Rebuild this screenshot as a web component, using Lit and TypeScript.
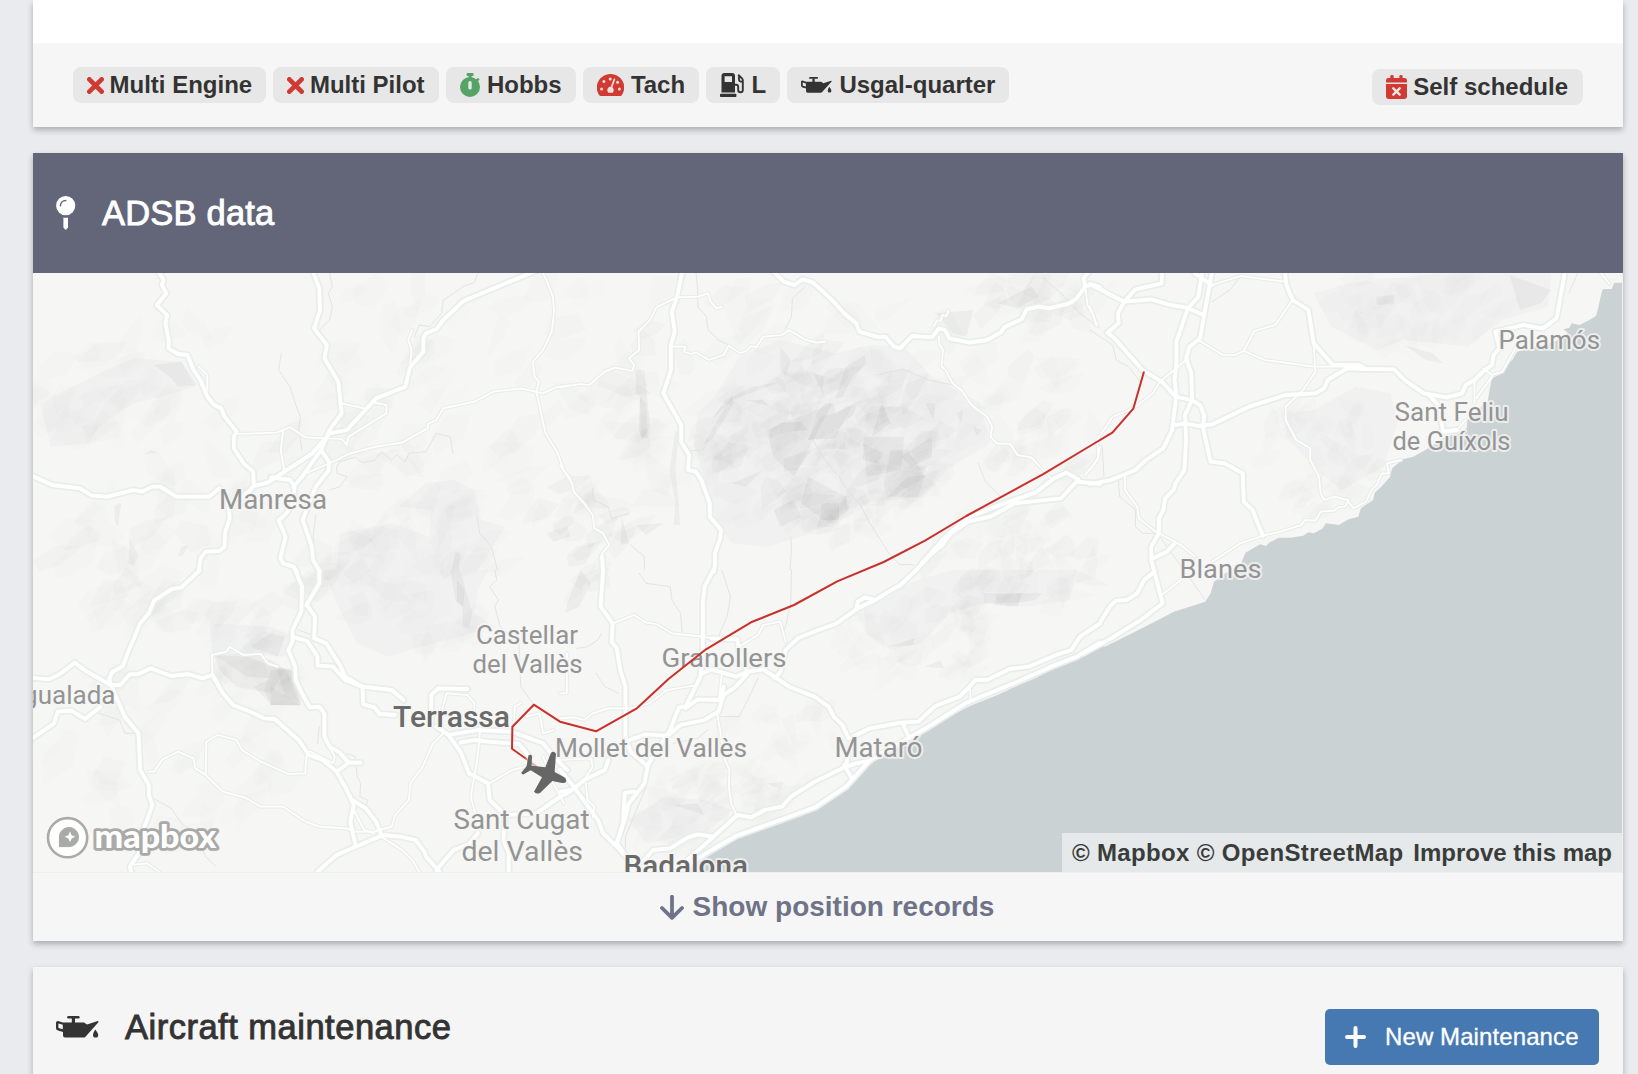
import { LitElement, html, svg, css } from "lit";
import { customElement } from "lit/decorators.js";

/* ---------- icons ---------- */

const crossIcon = html`<svg class="icon" width="17" height="17" viewBox="0 0 16 16">
  <path d="M2.2 2.2 13.8 13.8M13.8 2.2 2.2 13.8" stroke="#d03a32" stroke-width="4.4" stroke-linecap="round" /></svg>`;

const stopwatchIcon = html`<svg class="icon" width="20" height="24" viewBox="0 0 20 24">
  <g fill="#55a365"><circle cx="10" cy="14" r="10" />
  <rect x="6.6" y="0" width="7" height="3" rx="1" /><rect x="8.6" y="1" width="3" height="5" />
  <path d="M15.4 7.2 17.8 4.8 19.6 6.6 17.4 9z" /></g>
  <rect x="8.3" y="8" width="3.4" height="8.6" rx="1.7" fill="#e7e7e7" /></svg>`;

const gaugeIcon = html`<svg class="icon" width="27" height="22" viewBox="0 0 27 22">
  <path d="M13.5 0a13.5 13.5 0 0 1 12 20q-1 2-2 2H3.5q-1 0-2-2A13.5 13.5 0 0 1 13.5 0z" fill="#d03a32" />
  <g fill="#f3dedd"><circle cx="6.9" cy="7.6" r="1.5" /><circle cx="13.2" cy="4.9" r="1.5" />
  <circle cx="20.6" cy="8.2" r="1.5" /><circle cx="4.6" cy="15" r="1.5" /><circle cx="22.4" cy="15" r="1.5" /></g>
  <path d="M17.4 5.4 14.2 14" stroke="#f3dedd" stroke-width="1.7" stroke-linecap="round" />
  <path d="M13.5 12.8a3.2 3.2 0 0 1 3 4.4l-.6 1.6h-4.8l-.6-1.6a3.2 3.2 0 0 1 3-4.4z" fill="#f3dedd" /></svg>`;

const pumpIcon = html`<svg class="icon" width="24" height="24" viewBox="0 0 24 24">
  <path fill="#333" fill-rule="evenodd" d="M4.5 0H12a3 3 0 0 1 3 3V19.5H1.5V3a3 3 0 0 1 3-3zM4.6 3.2V9H12V3.2z" />
  <rect x="0" y="20.8" width="16.4" height="3.2" rx=".8" fill="#333" />
  <path d="M15 11.8h1.2a2 2 0 0 1 2 2V17a2.2 2.2 0 0 0 4.6 0V7.4a3 3 0 0 0-.8-2L18.2 1.8M19 3.4v3.2a2 2 0 0 0 1.6 2h2" fill="none" stroke="#333" stroke-width="1.9" /></svg>`;

const oilShape = svg`<g fill="#333">
  <path fill-rule="evenodd" d="M2 4.9 7 6.6H28L31 8.6 41.8 5q1.4 0 .4 1.4L29.7 20.4Q28.8 21.6 27 21.6H9Q7 21.6 7 19.6V16L2 14.6Q0 14 0 12.2V6.6Q0 5 2 4.9zM2.4 7.6V12L6.8 13.2V8.8z" />
  <rect x="11.2" y="0" width="12.4" height="2.4" rx="1.2" /><rect x="15.8" y="2" width="3.2" height="5" />
  <path d="M39.2 13.6q3 3.8 3 5.3a2.6 2.6 0 0 1-5.2 0q0-1.5 2.2-5.3z" /></g>`;
const oilIcon = html`<svg class="icon" width="31" height="16" viewBox="0 0 43 22">${oilShape}</svg>`;
const oilIconLarge = html`<svg width="43" height="22" viewBox="0 0 43 22">${oilShape}</svg>`;

const calendarIcon = html`<svg class="icon" width="21" height="24" viewBox="0 0 21 24">
  <g fill="#d03a32"><rect x="4.4" y="0" width="3.2" height="5" rx="1.2" /><rect x="13.4" y="0" width="3.2" height="5" rx="1.2" />
  <path d="M2.4 3H18.6A2.4 2.4 0 0 1 21 5.4V7.5H0V5.4A2.4 2.4 0 0 1 2.4 3z" />
  <path d="M0 9H21V21.6A2.4 2.4 0 0 1 18.6 24H2.4A2.4 2.4 0 0 1 0 21.6z" /></g>
  <path d="M7.3 13.3 13.7 19.7M13.7 13.3 7.3 19.7" stroke="#f0e4e4" stroke-width="2.4" stroke-linecap="round" /></svg>`;

const pinIcon = html`<svg width="20" height="34" viewBox="0 0 20 34">
  <circle cx="9.7" cy="9.6" r="9.6" fill="#fff" /><path d="M4.4 9.8a5.4 5.4 0 0 1 5.3-5.2" fill="none" stroke="#636678" stroke-width="1.5" stroke-linecap="round" />
  <path d="M7.4 21.4q2.3.5 4.6 0V31.4L9.7 34 7.4 31.4z" fill="#fff" /></svg>`;

const arrowIcon = html`<svg width="24" height="25" viewBox="0 0 24 25">
  <path d="M12 1.8V22.4M2 13 12 22.8 22 13" fill="none" stroke="#6f7388" stroke-width="3.8" stroke-linecap="round" stroke-linejoin="round" /></svg>`;

const plusIcon = html`<svg width="21" height="22" viewBox="0 0 21 22">
  <path d="M10.5 2V20M2 11H19" stroke="#fff" stroke-width="4" stroke-linecap="round" /></svg>`;

/* ---------- map data ---------- */

interface Tile {
  x: number;
  y: number;
  sx: number;
  major: string[];
  minor: string[];
  border: string[];
  massif: string[];
  relief: string[];
}

const tiles: Tile[] = [
  {
    x: 30, y: 270, sx: 0.34439,
    major: [
      "370,0 388,30 383,45 396,70 368,105 398,135 393,160 403,210 402,235 430,252 457,255 475,300 495,330 515,380 535,405 555,415 565,440 600,485 592,500 592,535 620,580 648,605 650,645",
      "820,0 840,55 842,120 825,175 862,225 855,265 895,335 905,430 870,480 845,540 790,620 765,650",
      "1480,-2 1400,32 1260,92 1200,150 1180,178 1150,190 1142,205 1142,245 1103,293 1090,350 1005,385 920,480 870,490 820,550 690,638 650,648 620,680",
      "0,615 65,645 145,655 180,677 225,680 300,660 325,665 355,650 378,650 425,680 520,680 550,655",
      "575,700 580,745 567,785 565,830 550,843 510,845 495,865 490,905",
      "845,540 868,575 868,600 830,650 810,700 792,750 818,830 822,870 842,905",
      "700,622 755,630 768,650 765,700 740,735 722,750 742,800 727,865 735,880 765,890 775,905",
    ],
    minor: [
      "605,492 715,488 755,472 800,502 905,507 920,525 925,500 1035,430 1035,405 1000,398",
      "905,400 970,415", "490,290 515,315 515,360", "735,485 728,540 740,610",
      "790,615 870,580 930,550 1005,530 1080,518 1155,475 1155,462 1180,450 1200,415 1290,395 1345,365 1425,355 1490,370 1525,353 1568,345",
      "1110,180 1098,210 1108,240 1103,290",
      "1490,10 1505,45 1518,80 1522,125 1515,185 1490,240 1460,275 1465,320 1478,335 1470,365 1497,490 1530,545 1550,600 1568,625",
    ],
    border: [
      "870,10 878,50 866,70 878,110 870,150 840,180", "730,250 722,300 755,350 770,400 785,440 780,480 790,540",
      "1300,10 1290,38 1260,48 1230,70 1200,90 1195,130 1160,170 1130,165 1115,205",
      "900,575 890,590 892,610 920,620 900,650 870,660",
      "900,575 945,562 965,578 1000,572 1020,545 1050,570 1065,555 1090,575 1100,550 1150,545 1180,490 1220,500 1228,550",
      "1298,740 1306,790 1340,830 1357,900", "830,735 822,800 825,850",
    ],
    massif: ["30,400 180,320 300,265 440,275 480,350 380,380 300,400 200,470 170,520 60,530",
      "1150,640 1230,630 1290,660 1310,750 1380,770 1300,900 890,900 900,790 1050,760 1160,800 1165,720 1070,710"],
    relief: ["1250,850 1245,900 1225,900 1235,845", "290,800 315,860 300,888 285,880", "245,705 265,700 255,770 245,750", "440,830 460,825 445,855 430,860", "1500,790 1560,770 1568,800 1520,815",
      "330,552 350,540 372,550", "360,285 440,275 485,345 430,350 410,325"],
  },
  {
    x: 30, y: 570, sx: 0.34439,
    major: [
      "493,0 440,52 410,58 360,92 345,130 320,160 300,210 285,245 270,288 240,305 230,325 235,345",
      "0,323 55,328 90,310 130,278 165,305 235,345 262,345 290,313 315,312 350,295 410,318 460,312 500,325 530,315 560,370 590,405 640,425 680,445 710,447 780,510 810,555 850,570 890,605",
      "0,510 70,460 80,425 120,422 160,447 205,410",
      "235,345 275,440 315,490 320,600 345,645 345,675 355,705 340,750 320,800 322,840 290,890 295,910",
      "770,0 790,50 788,125 762,180 762,215 750,240 770,290 772,330 790,370 812,412 840,410 855,430 855,500 870,530 900,548 925,578 890,605 920,660 940,705 930,755 945,825",
      "840,0 840,40 803,105 828,140 825,205 860,220 900,285 915,320 965,350 1050,360 1085,390",
      "770,203 805,213 835,260 835,287 880,290 915,330 965,350 968,403 1000,412 1015,432 1060,435",
      "925,578 960,578", "935,690 975,715 1005,755 1020,795 1075,800 1120,810 1145,845 1150,860 1190,905",
      "1020,797 945,830 890,855 835,905", "1180,900 1230,840 1275,822 1300,790",
      "1215,495 1250,545 1275,610 1330,640 1335,690 1380,735 1470,730 1540,680 1568,665",
      "1180,470 1215,495 1300,480 1400,485 1490,520 1520,560 1560,600", "1250,518 1290,510 1330,515 1420,522 1450,560",
      "1165,455 1165,375 1185,355 1270,357", "1380,735 1375,810 1390,850 1390,905",
    ],
    minor: [
      "510,615 512,515 545,495 600,510 615,540 665,572 750,612 800,610 800,590 805,545 815,545 880,580 885,560 860,515",
      "345,605 360,605 385,568 430,545 475,565 480,595 510,615 560,665 625,683 670,710 735,710 800,755 840,770 920,775 940,785 1000,785 1050,770 1060,735 1100,690 1105,640 1140,590 1170,520 1200,490",
      "530,320 528,255 570,245 580,230 620,255 670,252 690,280 720,290", "1335,640 1400,600 1440,590",
      "1405,455 1408,410 1425,400", "290,885 340,880 375,905", "1310,450 1300,560 1280,680 1300,760 1300,790",
      "1185,460 1210,370 1270,375 1290,400 1290,430", "1440,440 1480,430 1490,490 1520,480",
      "940,720 970,780 1000,790", "1020,800 1080,840 1110,870 1130,905", "1490,560 1520,640 1550,700",
    ],
    border: [
      "1350,0 1355,30 1335,50 1360,90 1350,110 1365,170 1420,220 1425,350 1463,404",
      "350,680 410,715 440,760 480,790 510,860 540,890", "200,430 260,450 275,490 310,490", "780,180 820,195",
      "920,550 945,560 950,620 960,640 958,680 980,690 975,720", "835,520 840,470",
    ],
    massif: ["850,0 1330,0 1300,60 1290,130 1350,170 1250,200 1100,240 1040,260 950,220 900,120", "520,160 700,170 760,200 740,260 530,250"],
    relief: ["535,255 630,320 700,325 650,350 700,405 785,408 745,300 700,270 640,250", "535,255 630,260 740,300 700,370 600,350 550,300", "700,350 785,405 700,405",
      "715,290 760,300 788,400 740,380", "700,300 760,300 788,405 700,405 680,360", "1220,0 1250,0 1265,60 1285,130 1275,175 1258,170 1255,110 1235,90", "1240,30 1262,60 1258,110 1240,95",
      "640,230 700,190 740,200 720,260"],
  },
  {
    x: 560, y: 270, sx: 0.34439,
    major: [
      "356,0 340,80 325,125 333,185 322,225 322,300 300,370 352,465 352,515 375,555 372,600 395,605 410,630 435,700 435,740 468,780 465,805 450,850 450,880 447,905",
      "615,0 650,35 680,45 705,28 735,38 790,90 825,130 860,160 870,185 925,202 945,200 970,230 988,235 1022,198 1080,202 1100,175 1118,180 1130,205 1190,218 1240,210 1280,187 1290,172 1340,148 1355,118 1390,110 1420,115 1480,100 1500,85 1525,50 1545,43 1568,52",
      "1525,50 1520,25 1535,5",
      "1030,905 1070,860 1110,825 1135,790 1185,755 1250,740 1320,700 1455,685 1500,635 1568,642",
      "1050,880 1120,800 1180,745 1290,700 1380,668 1435,625 1470,608 1505,628", "122,860 125,905",
    ],
    minor: [
      "470,110 455,115 437,95 430,70 400,80 340,82 280,112 262,150 228,185 230,240 200,265 215,285 210,303 160,293 130,305 85,345 60,342 0,352",
      "325,230 365,230 360,245 380,252 395,247 432,270 475,255 490,227 523,250 540,243 555,228 570,232 590,200 645,195 665,180 710,208 745,218 770,215",
      "0,585 35,640 40,665 70,700 95,735 100,775 125,790 143,825 122,850 122,880",
      "1100,200 1102,225 1112,240 1108,290 1120,300 1140,340 1165,360 1195,405 1240,440 1255,470 1250,500 1268,520 1308,522 1328,555 1368,562 1430,630",
      "1085,170 1095,150 1105,153 1110,135 1122,138 1128,122", "1525,50 1532,105 1550,140 1556,165", "1568,530 1560,570 1525,615",
    ],
    border: [
      "395,10 400,60 400,110 425,140 430,180 460,210 490,225", "712,50 675,85 672,140 655,175",
      "920,315 995,297 1070,330 1140,345", "735,510 765,565 810,620 840,670 870,700 900,760 955,850 985,883 1030,885",
      "670,800 672,840 668,900", "380,542 415,540 430,510", "1400,20 1460,75 1510,130 1568,175", "95,655 95,690 140,710 150,745 200,730",
      "205,825 245,860 245,900", "1215,580 1235,635 1280,680",
    ],
    massif: ["520,260 640,210 800,250 900,225 1000,230 1080,320 1220,400 1250,520 1120,600 1060,680 900,695 840,740 700,800 600,830 500,820 460,770 410,600 390,520 400,430 450,380"],
    relief: ["220,300 245,300 262,470 240,510 228,480 232,380 220,370", "335,480 345,490 335,600 345,700 348,765 330,765 335,700 318,600", "232,380 250,400 255,505 235,500",
      "415,525 500,375 505,400 440,510", "720,510 745,430 770,400 795,400 800,430 830,410 860,400 855,430 815,470 800,505", "720,510 755,440 800,430 850,405 815,470 760,505",
      "1270,100 1370,50 1390,80 1330,115", "1090,130 1200,120 1180,200 1140,190",
      "650,565 730,540 690,600 650,605", "610,480 640,458 700,455 720,480 660,485 610,505", "640,230 670,270 655,320 640,300", "800,385 830,290 885,255 890,280 850,320 820,380",
      "735,310 765,320 765,380", "1080,500 1080,560 1020,590 990,560", "1010,620 1060,615 1040,680 950,680", "880,520 940,550 920,580 880,570",
      "905,500 935,400 960,460", "180,740 200,820 175,825", "220,765 300,760 250,795", "500,640 590,600 540,650", "620,720 680,690 700,740 640,770", "760,700 810,700 810,750 755,750",
      "1200,470 1225,480 1210,500", "540,390 590,390 610,410", "960,540 1010,540 1060,620 950,690 940,640", "560,350 640,335 500,390 440,450 480,390", "1150,430 1170,420 1165,460",
      "1060,400 1090,400 1085,450", "880,500 1000,500 990,600 890,620", "600,480 720,430 790,400 740,500 680,620 620,560", "720,620 830,680 840,720 780,760 700,700"],
  },
  {
    x: 560, y: 570, sx: 0.34439,
    major: [
      "125,0 118,110 153,160 150,215 165,235 175,300 190,350 190,500 205,545 250,585",
      "445,0 420,50 415,100 415,240", "1035,0 985,48 970,55 915,90 865,115 800,162 750,180 690,205 655,240 640,305 625,325",
      "915,90 885,82 865,95 860,115", "415,240 408,320 365,410 345,412 320,480 255,585 245,640 200,700 190,740 165,820",
      "440,205 515,208 520,240 545,310 510,350 475,375 460,425 420,450 350,465 310,500",
      "408,312 440,298 480,310 510,320 545,305 590,298 625,322 665,350 740,380 780,410 795,440 820,465 838,505",
      "365,415 400,388 465,390 475,350", "200,510 250,493 310,497",
      "1568,160 1510,200 1485,240 1440,255 1360,290 1305,297 1240,330 1205,330 1190,350 1160,380 1090,408 1040,455 990,458 900,475 850,500 830,585",
      "1568,218 1500,260 1430,288 1340,330 1180,398 1070,470 900,570 830,650 740,712 640,750 510,798 440,840 370,885",
      "995,458 1010,495", "900,572 860,580 830,590 740,635 670,680 645,710 595,720 555,742 515,735 430,815 370,870",
      "825,585 845,620", "445,800 400,793 370,803 320,835 270,840 240,875", "215,665 188,668 183,760 165,820 200,870",
      "0,600 40,650 110,750 125,790 165,830 200,870", "0,665 35,660 70,630 130,600 140,570",
    ],
    minor: [
      "155,160 215,135 250,158 280,162 325,190 415,200 440,205", "520,230 575,195 590,165 640,155 655,215",
      "455,425 465,480 475,560 492,600 490,650 497,700 510,730", "0,445 40,442 70,450 95,430 140,415 205,415 260,400 310,360 400,345",
      "470,310 462,385", "1190,355 1193,390", "75,640 80,690 100,710 95,740", "0,370 20,370 20,250", "0,570 90,565 95,590 70,630",
    ],
    border: ["230,10 250,40 320,50 325,90 350,130 355,190", "470,0 495,80 485,140 460,200", "672,0 670,100 650,190", "465,440 520,440 550,380 575,325",
      "330,520 400,505 430,478", "190,900 190,800 250,650", "105,310 130,350 170,370", "50,235 80,230 110,210 120,190"],
    massif: ["200,750 300,680 420,690 500,720 420,790 250,820", "880,100 1040,30 1140,0 1500,0 1480,90 1360,110 1230,100 1130,130 1050,220 960,240 890,190"],
    relief: ["1230,70 1400,70 1380,90 1330,98 1230,100", "1270,75 1340,70 1330,110 1260,105", "1060,290 1105,270 1115,295", "950,230 1030,205 1025,225", "20,100 60,0 90,40 55,110 15,130", "600,640 650,635 640,660", "330,705 400,700 420,735"],
  },
  {
    x: 1090, y: 270, sx: 0.34949,
    major: [
      "0,42 60,75 98,95 175,88 230,105 275,112 325,135", "98,95 130,58 205,40 207,0",
      "98,95 80,130 82,160 50,188 70,205 150,300 205,335 245,380 290,390 315,405 328,440",
      "322,0 310,80 280,115 247,215 247,280 242,330 247,375 235,480 210,535 160,570 130,600 60,630 0,642",
      "350,0 315,205 285,230 275,265 290,310 292,390 272,435 275,510 270,600 245,640 240,658 215,685 210,720 197,745 197,790 175,830 175,870 185,910 208,1000 145,1050",
      "300,10 348,45",
      "325,440 325,480 345,575 385,580 437,610 440,695 465,720 480,760 495,797",
      "245,465 275,460 310,468 350,463 455,410 560,375 645,370 670,355 680,330 735,295 790,297",
      "557,0 562,45 580,90 625,120 640,220 695,285 770,285 790,297 870,298 900,330 955,370 1020,382 1065,370 1075,345 1100,330 1130,300 1150,285 1155,255 1172,235 1160,185 1240,165 1295,175 1335,145 1360,0",
      "970,375 1000,410 1010,485 1050,480", "185,905 155,930 135,970 105,990 75,992 58,1008 30,1055", "243,820 220,845 180,865",
      "145,1050 60,1105 -20,1150",
    ],
    minor: [
      "310,210 380,255 415,255 440,243 470,183 530,165 580,90", "440,243 500,270 640,290 735,290", "350,45 430,18 557,35",
      "640,225 645,305 610,360 560,410 560,450 590,510 630,535 630,570 655,620 660,670 670,690 700,680 735,690 755,715 790,695 805,660 820,645 835,610 855,610 850,580 890,570",
      "740,690 730,710 710,712 700,722 660,725 645,752 615,750 605,765 545,785 495,797 430,820 350,875",
      "197,790 260,825 300,860", "205,975 260,930", "275,270 200,335 180,370 125,415 65,440 20,510 25,560 0,600",
      "100,620 100,660 135,710 140,745 195,790", "1220,230 1180,305 1150,315 1125,295", "1150,320 1105,385", "1100,335 1100,400",
      "1075,450 1050,480 1015,490", "1455,0 1487,42", "0,110 20,165",
    ],
    border: ["0,180 65,225 75,270 110,290 150,345", "350,95 400,60 430,20", "1395,10 1370,70", "80,620 85,680 130,720 130,770 150,790 190,790", "200,800 330,990", "35,530 40,620"],
    massif: ["640,70 740,40 1000,10 1320,10 1310,110 1180,150 1130,190 1080,230 900,210 820,240 690,170", "560,430 640,420 760,350 860,370 880,460 840,590 720,660 650,600 560,500"],
    relief: ["1200,15 1320,60 1290,100 1230,120", "820,80 870,75 870,100 820,105", "900,225 980,250 1010,280 960,270"],
  },
];

const seaEast =
  "1540,38 1500,38 1493,57 1467,58 1460,85 1455,110 1448,138 1425,152 1400,165 1378,160 1372,173 1355,178 1368,190 1330,215 1260,235 1222,245 1210,268 1195,282 1180,310 1150,325 1145,350 1138,395 1120,410 1100,430 1080,450 1078,475 1050,490 1010,505 960,540 925,560 895,568 865,595 858,622 832,652 815,668 810,690 775,715 768,740 740,748 712,765 675,760 665,776 640,790 625,787 610,797 575,803 540,803 515,817 503,828 487,823 445,848 430,885 400,900 355,935 345,970 330,995 240,1025 195,1050 110,1095 28,1138 28,1900 1600,1900";
const seaWest =
  "1580,228 1500,268 1445,290 1380,325 1340,342 1270,375 1190,408 1140,435 1020,500 900,577 835,633 800,670 730,718 640,755 540,785 450,835 400,872 350,915 1580,915";

const track =
  "1143.8,372.3 1133.3,408.7 1112.4,432.7 1090,446 1042.8,474.3 966.3,516 925,540.7 883.7,562 837.2,581.3 794,605 751,622.3 706,649.3 668.5,679 636.4,708.7 596,731.3 560,721.7 533.8,704.7 512.4,726.7 512,748.7 526,758.7";

interface Place { name: string; x: number; y: number; w: number; size: number; city?: boolean }
const places: Place[] = [
  { name: "Manresa", x: 219, y: 508.7, w: 108, size: 28.5 },
  { name: "Igualada", x: 16, y: 704, w: 99.5, size: 26 },
  { name: "Castellar", x: 476, y: 644, w: 102, size: 26 },
  { name: "del Vallès", x: 472.5, y: 673, w: 110, size: 26 },
  { name: "Terrassa", x: 393, y: 726.7, w: 117, size: 29, city: true },
  { name: "Sant Cugat", x: 453.5, y: 828.7, w: 136, size: 28 },
  { name: "del Vallès", x: 461.5, y: 860.7, w: 121.5, size: 28 },
  { name: "Granollers", x: 661.5, y: 666.7, w: 125, size: 26 },
  { name: "Mollet del Vallès", x: 555, y: 756.7, w: 192, size: 26 },
  { name: "Mataró", x: 834.5, y: 756.7, w: 88, size: 27 },
  { name: "Badalona", x: 623.5, y: 875.5, w: 124.5, size: 29, city: true },
  { name: "Palamós", x: 1498.5, y: 349, w: 101.5, size: 26 },
  { name: "Sant Feliu", x: 1394.5, y: 421, w: 114, size: 26 },
  { name: "de Guíxols", x: 1392.5, y: 450, w: 118, size: 26 },
  { name: "Blanes", x: 1179.5, y: 577.7, w: 82, size: 26 },
];

/* Hill shading: [centre x, centre y, radius x, radius y, facets, facet size, strength] */
const hills: number[][] = [
  [825, 445, 128, 98, 150, 22, 0.016],
  [105, 395, 80, 42, 34, 24, 0.009],
  [430, 570, 85, 75, 50, 24, 0.011],
  [255, 665, 45, 35, 18, 18, 0.014],
  [1015, 560, 85, 55, 55, 20, 0.014],
  [920, 640, 80, 45, 45, 20, 0.011],
  [1320, 455, 60, 60, 40, 18, 0.01],
  [1410, 310, 95, 45, 40, 22, 0.009],
  [700, 810, 75, 45, 40, 20, 0.011],
  [780, 750, 60, 55, 30, 18, 0.01],
  [1050, 300, 70, 30, 22, 24, 0.014],
  [580, 540, 50, 60, 26, 20, 0.018],
  [635, 430, 16, 110, 14, 26, 0.016],
  [570, 400, 510, 125, 130, 25, 0.012],
  [200, 560, 170, 70, 60, 26, 0.013],
  [160, 760, 130, 90, 36, 26, 0.01],
  [1040, 420, 60, 70, 26, 22, 0.012],
];

function buildFacets(): { d: string; o: number }[] {
  let seed = 20417;
  const rnd = () => {
    seed = (seed * 1103515245 + 12345) % 2147483648;
    return seed / 2147483648;
  };
  const out: { d: string; o: number }[] = [];
  for (const [cx, cy, rx, ry, n, size, strength] of hills) {
    for (let i = 0; i < n; i++) {
      const t = rnd() * Math.PI * 2;
      const r = Math.sqrt(rnd());
      const x = cx + Math.cos(t) * r * rx;
      const y = cy + Math.sin(t) * r * ry;
      const turn = rnd() > 0.35 ? -0.9 + rnd() * 0.6 : rnd() * 3;
      const pts: string[] = [];
      for (let k = 0; k < 5; k++) {
        const a = (k / 5) * Math.PI * 2;
        const px = Math.cos(a) * size * (0.4 + rnd());
        const py = Math.sin(a) * size * (0.2 + rnd() * 0.5);
        pts.push(
          `${(x + px * Math.cos(turn) - py * Math.sin(turn)).toFixed(1)} ${(y + px * Math.sin(turn) + py * Math.cos(turn)).toFixed(1)}`
        );
      }
      out.push({ d: `M${pts.join("L")}Z`, o: strength * (0.4 + rnd() * 1.1) });
    }
  }
  return out;
}
const facets = buildFacets();

const place = (t: Tile) => `translate(${t.x} ${t.y}) scale(${t.sx} .33333)`;
const layer = (key: "major" | "minor" | "border", cls: string) =>
  tiles.map((t) => svg`<g class=${cls} transform=${place(t)}>${t[key].map((p) => svg`<polyline points=${p} />`)}</g>`);

@customElement("position-map")
export class PositionMap extends LitElement {
  static styles = css`
    :host { display: block; position: relative; height: 600px; background: #eef0f0; overflow: hidden; }
    .canvas { display: block; width: 1589px; height: 599px; background: #f6f6f4; }
    polyline { fill: none; vector-effect: non-scaling-stroke; stroke-linejoin: round; stroke-linecap: round; }
    .major-case polyline { stroke: #e9eeec; stroke-width: 7.4px; }
    .major polyline { stroke: #fff; stroke-width: 3.8px; }
    .minor-case polyline { stroke: #e9edeb; stroke-width: 4px; }
    .minor polyline { stroke: #fff; stroke-width: 1.7px; }
    .border polyline { stroke: #dcdedd; stroke-width: 0.8px; stroke-dasharray: 2 1; }
    .massif { fill: #f1f1f2; }
    .relief { fill: #303034; fill-opacity: 0.042; }
    .sea { fill: #cad2d3; }
    .track { stroke: #c8312b; stroke-width: 2px; }
    .track-end { stroke: #e6908c; stroke-width: 2px; opacity: 0.7; }
    .label { font-family: Roboto, "Liberation Sans", sans-serif; fill: #949494; stroke: #f6f6f5; stroke-opacity: 0.75;
      stroke-width: 4px; stroke-linejoin: round; paint-order: stroke; }
    .city { fill: #6a6a6a; font-weight: 500; }
    .brand { font-family: Lato, Roboto, sans-serif; font-weight: 900; font-size: 32px; fill: #fff; stroke: #aaaaa8;
      stroke-width: 5.6px; stroke-linejoin: round; paint-order: stroke; }
    .attribution { position: absolute; right: 1px; bottom: 1px; height: 39px; width: 560px; box-sizing: border-box;
      padding: 0 10px; display: flex; justify-content: space-between; align-items: center;
      background: rgba(255, 255, 255, 0.5); font: bold 24px/39px "Liberation Sans", Arial, sans-serif; color: #3a3c3c;
      white-space: pre; }
    .credits { letter-spacing: 0.34px; }
  `;

  render() {
    return html`
      <svg class="canvas" viewBox="33 273 1589 599">
        ${tiles.map((t) => svg`<g class="massif" transform=${place(t)}>${t.massif.map((p) => svg`<polygon points=${p} />`)}</g>`)}
        <g fill="#303034">${facets.map((f) => svg`<path d=${f.d} fill-opacity=${f.o.toFixed(4)} />`)}</g>
        ${tiles.map((t) => svg`<g class="relief" transform=${place(t)}>${t.relief.map((p) => svg`<polygon points=${p} />`)}</g>`)}
        <polygon class="sea" transform=${place(tiles[4])} points=${seaEast} />
        <polygon class="sea" transform=${place(tiles[3])} points=${seaWest} />
        ${layer("border", "border")}
        ${layer("minor", "minor-case")} ${layer("major", "major-case")}
        ${layer("minor", "minor")} ${layer("major", "major")}
        ${places.map((p) => svg`<text class=${p.city ? "label city" : "label"} x=${p.x} y=${p.y}
          font-size=${p.size} textLength=${p.w} lengthAdjust="spacingAndGlyphs">${p.name}</text>`)}
        <polyline class="track" points=${track} />
        <polyline class="track-end" points="526,758.7 546,774" />
        <path fill="#666" transform="translate(505 735) scale(.33333)"
          d="M70 62Q75 57 81 62L80 92 121 97 138 53Q147 47 153 56L149 111 178 127Q186 132 183 141 178 146 168 143L142 138 105 174Q95 179 87 170L111 127 77 106 56 118Q50 119 49 113L65 93Z" />
        <g>
          <circle cx="67.6" cy="837.7" r="19.6" fill="#fff" stroke="#aaaaa8" stroke-width="2.6" />
          <path d="M59.4 846.6V838a9.6 9.6 0 1 1 9.4 8.6z" fill="#a9aba8" stroke="#a9aba8" stroke-width="1" stroke-linejoin="round" />
          <path d="M70 831.4 71.6 835.2 75.4 836.8 71.6 838.4 70 842.2 68.4 838.4 64.6 836.8 68.4 835.2z" fill="#fff" />
        </g>
        <text class="brand" x="94.5" y="847.8" textLength="122" lengthAdjust="spacingAndGlyphs">mapbox</text>
      </svg>
      <div class="attribution"><span class="credits">© Mapbox © OpenStreetMap</span><span>Improve this map</span></div>
    `;
  }
}

@customElement("app-root")
export class AppRoot extends LitElement {
  static styles = css`
    :host { display: block; box-sizing: border-box; width: 1638px; height: 1074px; overflow: hidden; background: #e9ebef;
      padding: 0 15px 0 33px; font-family: "Liberation Sans", Arial, Helvetica, sans-serif; color: #333; }
    .stack { display: flex; flex-direction: column; gap: 26px; }
    .card { background: #f6f6f6; box-shadow: 0 3px 6px rgba(0, 0, 0, 0.27); }
    .blank { height: 43px; background: #fff; }
    .features { height: 84px; box-sizing: border-box; padding: 0 40px; display: flex; justify-content: space-between; align-items: center; }
    .tags { display: flex; gap: 7.3px; }
    .tag { display: flex; align-items: center; gap: 7px; height: 36px; padding: 0 14px; border-radius: 8px; background: #e7e7e7;
      font-weight: bold; font-size: 24px; line-height: 36px; white-space: nowrap; }
    .tag.off { gap: 6px; padding-left: 13.5px; }
    .tag.late { margin-top: 4px; gap: 6px; padding-right: 15px; }
    .icon { flex: none; }
    .head { height: 120px; background: #636678; color: #fff; display: flex; align-items: center; padding-left: 23px; gap: 26px; }
    .title { font-size: 34.5px; line-height: 40px; white-space: nowrap; -webkit-text-stroke: 0.9px currentColor; letter-spacing: 0.2px; }
    .heading .title { letter-spacing: 0.5px; }
    .more { height: 68px; display: flex; align-items: center; justify-content: center; gap: 9px; color: #6f7388;
      font-weight: bold; font-size: 28px; padding-right: 2px; }
    .maintenance { height: 140px; box-sizing: border-box; padding: 40px 24px 0 23px; display: flex; justify-content: space-between;
      align-items: flex-start; background: #f5f5f5; }
    .heading { display: flex; align-items: center; gap: 26px; height: 40px; }
    .button { display: flex; align-items: center; box-sizing: border-box; width: 274px; height: 56px; margin-top: 2px; padding: 0 20px;
      border-radius: 5px; background: #4679b2; color: #fff; font-size: 24px; gap: 19px; white-space: nowrap;
      letter-spacing: 0.1px; -webkit-text-stroke: 0.3px currentColor; }
  `;

  private tags = [
    { icon: crossIcon, text: "Multi Engine", off: true },
    { icon: crossIcon, text: "Multi Pilot", off: true },
    { icon: stopwatchIcon, text: "Hobbs" },
    { icon: gaugeIcon, text: "Tach" },
    { icon: pumpIcon, text: "L" },
    { icon: oilIcon, text: "Usgal-quarter" },
  ];

  render() {
    return html`
      <div class="stack">
        <section class="card">
          <div class="blank"></div>
          <div class="features">
            <div class="tags">${this.tags.map((t) => html`<span class=${t.off ? "tag off" : "tag"}>${t.icon}<span>${t.text}</span></span>`)}</div>
            <span class="tag late">${calendarIcon}<span>Self schedule</span></span>
          </div>
        </section>
        <section class="card">
          <div class="head">${pinIcon}<span class="title">ADSB data</span></div>
          <position-map></position-map>
          <div class="more">${arrowIcon}<span>Show position records</span></div>
        </section>
        <section class="card maintenance">
          <div class="heading">${oilIconLarge}<span class="title">Aircraft maintenance</span></div>
          <div class="button">${plusIcon}<span>New Maintenance</span></div>
        </section>
      </div>
    `;
  }
}
